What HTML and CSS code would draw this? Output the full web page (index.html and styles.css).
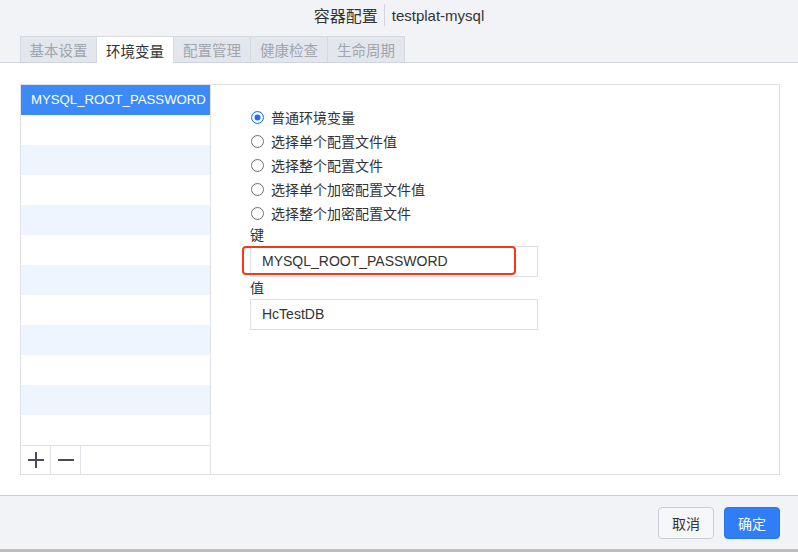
FILE: index.html
```html
<!DOCTYPE html>
<html lang="zh">
<head>
<meta charset="utf-8">
<title>容器配置</title>
<link rel="stylesheet" href="styles.css">
</head>
<body>
<div class="dialog">
  <div class="header">
    <div class="title"><span class="t-main">容器配置</span><span class="sep"></span><span class="t-sub">testplat-mysql</span></div>
    <div class="tabs">
      <div class="tab">基本设置</div>
      <div class="tab active">环境变量</div>
      <div class="tab">配置管理</div>
      <div class="tab">健康检查</div>
      <div class="tab">生命周期</div>
    </div>
  </div>
  <div class="content">
    <div class="panel">
      <div class="list">
        <div class="rows">
          <div class="row selected">MYSQL_ROOT_PASSWORD</div>
          <div class="row"></div>
          <div class="row stripe"></div>
          <div class="row"></div>
          <div class="row stripe"></div>
          <div class="row"></div>
          <div class="row stripe"></div>
          <div class="row"></div>
          <div class="row stripe"></div>
          <div class="row"></div>
          <div class="row stripe"></div>
          <div class="row"></div>
        </div>
        <div class="toolbar">
          <div class="tbtn"><svg width="18" height="18" viewBox="0 0 18 18"><path d="M9 1v16M1 9h16" stroke="#4a4d57" stroke-width="2" fill="none"/></svg></div>
          <div class="tbtn"><svg width="18" height="18" viewBox="0 0 18 18"><path d="M1 9h16" stroke="#4a4d57" stroke-width="2" fill="none"/></svg></div>
        </div>
      </div>
      <div class="form">
        <label class="radio"><span class="circle on"></span>普通环境变量</label>
        <label class="radio"><span class="circle"></span>选择单个配置文件值</label>
        <label class="radio"><span class="circle"></span>选择整个配置文件</label>
        <label class="radio"><span class="circle"></span>选择单个加密配置文件值</label>
        <label class="radio"><span class="circle"></span>选择整个加密配置文件</label>
        <div class="field-label">键</div>
        <div class="input-wrap">
          <div class="input">MYSQL_ROOT_PASSWORD</div>
          <div class="highlight"></div>
        </div>
        <div class="field-label second">值</div>
        <div class="input">HcTestDB</div>
      </div>
    </div>
  </div>
  <div class="footer">
    <button class="btn">取消</button>
    <button class="btn primary">确定</button>
  </div>
  <div class="edge"></div>
</div>
</body>
</html>
```
FILE: styles.css
```css
* { box-sizing: border-box; }
html, body { margin: 0; padding: 0; }
body {
  width: 798px;
  height: 552px;
  overflow: hidden;
  font-family: "Liberation Sans", "Noto Sans CJK SC", sans-serif;
  font-size: 14px;
  color: #333;
  background: #fff;
}
.dialog { display: flex; flex-direction: column; height: 552px; }
.header {
  height: 63px;
  background: #f2f3f7;
  border-bottom: 1px solid #cfd3dc;
  display: flex;
  flex-direction: column;
}
.title {
  height: 36px;
  display: flex;
  align-items: center;
  justify-content: center;
  padding-bottom: 6px;
  font-size: 15px;
  color: #333;
}
.t-main { font-size: 16px; }
.sep { width: 1px; height: 22px; background: #d3d6dc; margin: 0 7px 0 6px; }
.tabs { display: flex; padding-left: 20px; height: 26px; }
.tab {
  width: 77px;
  height: 26px;
  display: flex;
  align-items: center;
  justify-content: center;
  background: #e3e6ed;
  border: 1px solid #d6d9e0;
  border-bottom: none;
  border-left: none;
  color: #a0a5ae;
  font-size: 14.5px;
}
.tab:first-child { border-left: 1px solid #d6d9e0; }
.tab.active { background: #fff; color: #333; height: 27px; }
.content { flex: 1; padding: 21px 18px 20px 20px; background: #fff; }
.panel {
  height: 391px;
  border: 1px solid #dfe1e6;
  display: flex;
}
.list {
  width: 190px;
  border-right: 1px solid #dfe1e6;
  display: flex;
  flex-direction: column;
}
.rows { flex: 1; }
.row { height: 30px; line-height: 30px; padding-left: 10px; font-size: 13.2px; white-space: nowrap; overflow: hidden; }
.row.stripe { background: #eef5fe; }
.row.selected { background: #3b8af7; color: #fff; }
.toolbar {
  height: 31px;
  border-top: 1px solid #dfe1e6;
  display: flex;
}
.tbtn {
  width: 30px;
  border-right: 1px solid #dfe1e6;
  display: flex;
  align-items: center;
  justify-content: center;
}
.form { padding: 20px 0 0 39px; display: flex; flex-direction: column; }
.radio {
  height: 24px;
  display: flex;
  align-items: center;
  font-size: 14px;
  color: #333;
}
.circle {
  width: 13px;
  height: 13px;
  border: 1px solid #6f7277;
  border-radius: 50%;
  margin-right: 7px;
  margin-left: 1px;
  flex: none;
}
.circle.on { border: 1px solid #1f6ff2; background: #fff; box-shadow: inset 0 0 0 2.5px #fff, inset 0 0 0 7px #1f6ff2; }
.field-label { height: 21px; line-height: 20px; font-size: 14px; color: #333; }
.field-label.second { height: 22px; line-height: 22px; }
.input-wrap { position: relative; }
.input {
  width: 288px;
  height: 31px;
  border: 1px solid #dcdfe5;
  padding-left: 11px;
  line-height: 29px;
  font-size: 14px;
  color: #333;
}
.highlight {
  position: absolute;
  left: -8px;
  top: 0;
  width: 274px;
  height: 29px;
  border: 2px solid #ef3b1d;
  border-radius: 4px;
}
.footer {
  height: 54px;
  background: #f2f3f7;
  border-top: 1px solid #c9cdd5;
  display: flex;
  justify-content: flex-end;
  align-items: flex-start;
  padding: 11px 18px 0 0;
  gap: 10px;
}
.btn {
  width: 56px;
  height: 32px;
  border: 1px solid #c9cdd4;
  border-radius: 4px;
  background: #f6f7f9;
  color: #333;
  font-family: "Liberation Sans", "Noto Sans CJK SC", sans-serif;
  font-size: 14px;
  padding: 0;
}
.btn.primary { background: #2f7ef6; border-color: #2a76ee; color: #fff; }
.edge { height: 3px; background: #bcbcbc; }
```
